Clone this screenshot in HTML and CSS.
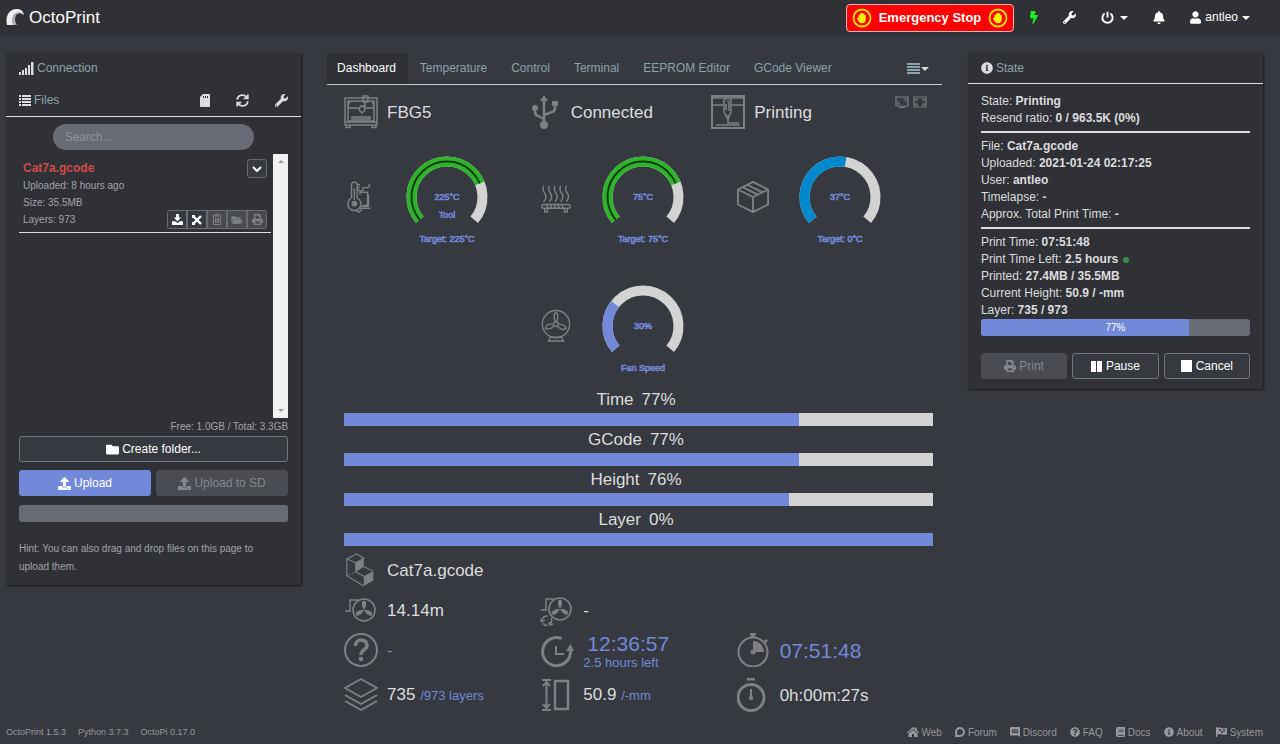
FILE: index.html
```html
<!DOCTYPE html>
<html lang="en">
<head>
  <meta charset="UTF-8" />
  <meta name="viewport" content="width=device-width, initial-scale=1.0" />
  <title>OctoPrint</title>
  <link rel="stylesheet" href="styles.css">
</head>
<body>
  <!-- shared icons -->
  <svg class="sprite" aria-hidden="true">
    <symbol id="i-wrench" viewBox="0 0 512 512"><path d="M507.73 109.1c-2.24-9.03-13.54-12.09-20.12-5.51l-74.36 74.36-67.88-11.31-11.31-67.88 74.36-74.36c6.62-6.62 3.43-17.9-5.66-20.16-47.38-11.74-99.55.91-136.58 37.93-39.64 39.64-50.55 97.1-34.05 147.2L18.74 402.76c-24.99 24.99-24.99 65.51 0 90.5 24.99 24.99 65.51 24.99 90.5 0l213.21-213.21c50.12 16.71 107.47 5.68 147.37-34.22 37.07-37.07 49.7-89.32 37.91-136.73zM64 472c-13.25 0-24-10.75-24-24 0-13.26 10.75-24 24-24s24 10.75 24 24c0 13.25-10.75 24-24 24z"/></symbol>
    <symbol id="i-upload" viewBox="0 0 512 512"><path d="M296 384h-80c-13.3 0-24-10.7-24-24V192h-87.7c-17.8 0-26.7-21.5-14.1-34.1L242.3 5.7c7.5-7.5 19.8-7.5 27.3 0l152.2 152.2c12.6 12.6 3.7 34.1-14.1 34.1H320v168c0 13.3-10.7 24-24 24zm216-8v112c0 13.3-10.7 24-24 24H24c-13.3 0-24-10.7-24-24V376c0-13.3 10.7-24 24-24h136v8c0 30.9 25.1 56 56 56h80c30.9 0 56-25.1 56-56v-8h136c13.3 0 24 10.7 24 24zm-124 88c0-11-9-20-20-20s-20 9-20 20 9 20 20 20 20-9 20-20zm64 0c0-11-9-20-20-20s-20 9-20 20 9 20 20 20 20-9 20-20z"/></symbol>
    <symbol id="i-print" viewBox="0 0 16 16"><path fill-rule="evenodd" d="M3 0h8l2 2v5h1a2 2 0 0 1 2 2v4h-3v3H3v-3H0V9a2 2 0 0 1 2-2h1zM5 2v5h6V4H9V2zM5 11v3h6v-3zM13 8.5a.8.8 0 1 0 .1 1.6.8.8 0 0 0-.1-1.6z"/></symbol>
    <symbol id="i-info" viewBox="0 0 512 512"><path d="M256 8C119.043 8 8 119.083 8 256c0 136.997 111.043 248 248 248s248-111.003 248-248C504 119.083 392.957 8 256 8zm0 110c23.196 0 42 18.804 42 42s-18.804 42-42 42-42-18.804-42-42 18.804-42 42-42zm56 254c0 6.627-5.373 12-12 12h-88c-6.627 0-12-5.373-12-12v-24c0-6.627 5.373-12 12-12h12v-64h-12c-6.627 0-12-5.373-12-12v-24c0-6.627 5.373-12 12-12h64c6.627 0 12 5.373 12 12v100h12c6.627 0 12 5.373 12 12v24z"/></symbol>
    <symbol id="i-hand" viewBox="0 0 20 20"><circle cx="10" cy="10" r="8.5" fill="none" stroke="#ffe000" stroke-width="1.8"/><path fill="#fff000" d="M6.5 7.600c0-1 1.300-1 1.300-.1V6c0-1 1.400-1 1.500 0v-.7c0-1 1.500-1 1.500 0V6c.1-1 1.500-.9 1.500.1v1.200c.1-.9 1.500-.8 1.500.2v3.700c0 2.500-1.500 4-3.600 4-1.800 0-2.900-.7-3.900-2.300L5 10.600c-.4-.8.6-1.400 1.500-.4z"/></symbol>
    <symbol id="i-fan" viewBox="0 0 24 24"><circle cx="12" cy="12" r="11" fill="none" stroke="currentColor" stroke-width="1.6"/><g fill="currentColor"><path d="M12 12 10 8V3.600q2-1.600 4 0V8z"/><path d="M12 12 10 8V3.600q2-1.600 4 0V8z" transform="rotate(120 12 12)"/><path d="M12 12 10 8V3.600q2-1.600 4 0V8z" transform="rotate(240 12 12)"/></g></symbol>
  </svg>

  <header class="navbar">
    <a class="brand" href="#">
      <svg width="18" height="17" viewBox="0 0 18 17"><path fill="#eee" d="M1 16C-1 7 3 0 11 0c4 0 6 2 7 6-3-3-6-2.500-8 0-2 3-1.500 7 .5 10z"/><path fill="#aaa" d="M7 16C5 11 6 5 10.500 3.500 13 3 16 3 17.500 6 14 3.500 11 4 9.700 6.500 8.500 9.500 9 13 10.500 16z"/></svg>
      OctoPrint
    </a>
    <nav class="nav-items">
      <button class="btn-stop"><svg width="20" height="20"><use href="#i-hand"/></svg>Emergency Stop<svg width="20" height="20"><use href="#i-hand"/></svg></button>
      <button class="nav-btn bolt" aria-label="Power"><svg width="8" height="13" viewBox="0 0 320 512"><path d="M296 160H180.600l42.600-129.800C227.200 15 215.700 0 200 0H56C44 0 33.800 8.900 32.200 20.800l-32 240C-1.700 275.200 9.500 288 24 288h118.700L96.600 482.500c-3.600 15.200 8 29.500 23.300 29.500 8.400 0 16.400-4.400 20.800-12l176-304c9.300-15.900-2.200-36-20.700-36z"/></svg></button>
      <button class="nav-btn" aria-label="Settings"><svg width="13" height="13"><use href="#i-wrench"/></svg></button>
      <button class="nav-btn" aria-label="System"><svg width="13" height="13" viewBox="0 0 16 16"><path class="line" stroke-width="2.400" d="M4.500 3a6.300 6.300 0 1 0 7 0M8 1v7"/></svg><i class="caret"></i></button>
      <button class="nav-btn" aria-label="Notifications"><svg width="12" height="13" viewBox="0 0 448 512"><path d="M224 512c35.320 0 63.970-28.650 63.970-64H160.030c0 35.350 28.650 64 63.970 64zm215.390-149.710c-19.320-20.760-55.470-51.990-55.470-154.290 0-77.700-54.480-139.900-127.940-155.160V32c0-17.670-14.320-32-31.980-32s-31.980 14.330-31.980 32v20.840C118.560 68.100 64.080 130.300 64.080 208c0 102.300-36.150 133.530-55.470 154.290-6 6.450-8.660 14.160-8.610 21.710.11 16.400 12.980 32 32.100 32h383.800c19.120 0 32-15.600 32.100-32 .05-7.550-2.610-15.270-8.610-21.710z"/></svg></button>
      <button class="nav-btn user"><svg width="11" height="13" viewBox="0 0 448 512"><path d="M224 256c70.700 0 128-57.300 128-128S294.700 0 224 0 96 57.300 96 128s57.300 128 128 128zm89.600 32h-16.700c-22.200 10.200-46.900 16-72.900 16s-50.600-5.800-72.900-16h-16.700C60.200 288 0 348.200 0 422.400V464c0 26.500 21.500 48 48 48h352c26.500 0 48-21.500 48-48v-41.600c0-74.200-60.200-134.400-134.400-134.400z"/></svg>antleo<i class="caret"></i></button>
    </nav>
  </header>

  <main class="layout">
    <aside class="panel">
      <h2 class="panel-title"><svg width="15" height="13" viewBox="0 0 15 13"><path d="M0 10h2v3H0zM3 8h2v5H3zM6 6h2v7H6zM9 3h2v10H9zM12 0h2.500v13H12z"/></svg>Connection</h2>
      <div class="panel-title files-title">
        <svg width="12" height="12" viewBox="0 0 12 12"><path d="M0 1h2v2H0zM3 1h9v2H3zM0 4h2v2H0zM3 4h9v2H3zM0 7h2v2H0zM3 7h9v2H3zM0 10h2v2H0zM3 10h9v2H3z"/></svg>
        <h2>Files</h2>
        <div class="title-tools">
          <button aria-label="SD card"><svg width="10" height="13" viewBox="0 0 10 13"><path fill-rule="evenodd" d="M3 0h6a1 1 0 0 1 1 1v11a1 1 0 0 1-1 1H1a1 1 0 0 1-1-1V3zM3 2v2h1V2zM5 2v2h1V2zM7 2v2h1V2z"/></svg></button>
          <button aria-label="Refresh"><svg width="13" height="13" viewBox="0 0 16 16"><path class="line" stroke-width="2.200" d="M1.500 7a6.500 6.500 0 0 1 12-2.500M14.500 9a6.500 6.500 0 0 1-12 2.500M14.500 .5v5h-5M1.500 15.500v-5h5"/></svg></button>
          <button aria-label="File settings"><svg width="13" height="13"><use href="#i-wrench"/></svg></button>
        </div>
      </div>

      <div class="files">
        <input class="search" type="text" placeholder="Search..." aria-label="Search files" />
        <div class="file-list">
          <div class="entry">
            <div class="entry-head"><a href="#">Cat7a.gcode</a><button class="toggle" aria-label="More"><svg width="10" height="6" viewBox="0 0 10 6"><path class="line" stroke-width="2" d="M1 1l4 4 4-4"/></svg></button></div>
            <div>Uploaded: 8 hours ago</div>
            <div>Size: 35.5MB</div>
            <div class="entry-foot">Layers: 973
              <div class="btn-row">
                <button aria-label="Download"><svg width="11" height="11" viewBox="0 0 16 16"><path d="M6 0h4v5h3.500L8 10.500 2.500 5H6zM0 10.500h4.500L8 13l3.500-2.500H16V16H0z"/></svg></button>
                <button aria-label="Cut"><svg width="10" height="10" viewBox="0 0 10 10"><path class="line" stroke-width="2.400" d="M1 1l8 8M9 1L1 9"/><path d="M0 0h3v3H0zM0 7h3v3H0z"/></svg></button>
                <button disabled aria-label="Delete"><svg width="10" height="11" viewBox="0 0 10 11"><path class="line" d="M0 2h10M3 2V.5h4V2M1.500 2.500v8h7v-8M3.500 4v5M5 4v5M6.500 4v5"/></svg></button>
                <button disabled aria-label="Load"><svg width="12" height="10" viewBox="0 0 576 512"><path d="M572.694 292.093L500.270 416.248A63.997 63.997 0 0 1 444.989 448H45.025c-18.523 0-30.064-20.093-20.731-36.093l72.424-124.155A64 64 0 0 1 152 256h399.964c18.523 0 30.064 20.093 20.730 36.093zM152 224h328v-48c0-26.510-21.490-48-48-48H272l-64-64H48C21.490 64 0 85.490 0 112v278.046l69.077-118.418C86.214 242.250 117.989 224 152 224z"/></svg></button>
                <button disabled aria-label="Print file"><svg width="11" height="11"><use href="#i-print"/></svg></button>
              </div>
            </div>
          </div>
          <div class="scroll"><i class="up"></i><i class="down"></i></div>
        </div>
        <div class="free">Free: 1.0GB / Total: 3.3GB</div>
        <button class="btn"><svg width="13" height="13" viewBox="0 0 512 512"><path d="M464 128H272l-64-64H48C21.490 64 0 85.490 0 112v288c0 26.510 21.490 48 48 48h416c26.510 0 48-21.490 48-48V176c0-26.510-21.490-48-48-48z"/></svg>Create folder...</button>
        <div class="uploads">
          <button class="btn btn-primary"><svg width="13" height="13"><use href="#i-upload"/></svg>Upload</button>
          <button class="btn" disabled><svg width="13" height="13"><use href="#i-upload"/></svg>Upload to SD</button>
        </div>
        <div class="progress"></div>
        <p class="hint">Hint: You can also drag and drop files on this page to upload them.</p>
      </div>
    </aside>

    <section class="center">
      <nav class="tabs">
        <a class="active" href="#">Dashboard</a>
        <a href="#">Temperature</a>
        <a href="#">Control</a>
        <a href="#">Terminal</a>
        <a href="#">EEPROM Editor</a>
        <a href="#">GCode Viewer</a>
        <button class="tab-menu" aria-label="More tabs"><svg width="13" height="11" viewBox="0 0 13 11"><path d="M0 0h13v2H0zM0 3h13v2H0zM0 6h13v2H0zM0 9h13v2H0z"/></svg><i class="caret"></i></button>
      </nav>

      <div class="dash">
        <div class="status-row">
          <div class="stat"><svg class="icon" viewBox="0 0 34 34"><path class="line" d="M1 3h32v27H1zM4 6h26v20H4zM1 27h32M2 30v2.500h4V30M28 30v2.500h4V30M4 11l2-5M30 11l-2-5M4 13h12M20 13h10M8 22h18v2H8z"/><path class="line" d="M19 7V1h5v6zM21 7v4h-5M18 11a3 3 0 0 1 2 5l-2 2-2-2a3 3 0 0 1 2-5z"/></svg>FBG5</div>
          <div class="stat"><svg class="icon" viewBox="0 0 34 34"><path class="line" stroke-width="2.500" d="M16 30V4M16 24l-6-3q-3-1-3-4v-4M16 20l8-3q3-1 3-4V8"/><path d="M12 6l4-6 4 6zM24 6h6v5h-6z"/><circle cx="7" cy="13" r="3"/><circle cx="16" cy="30" r="4"/></svg>Connected</div>
          <div class="stat"><svg class="icon" viewBox="0 0 34 34"><path class="line" stroke-width="2" d="M1 1h32v32H1z"/><path class="line" d="M2 3h30M2 10h10M21 10h11M13 17V5q4-4 7 0v12l-2 4h-3zM15 21l2 4 1-4M17 25v3h11M5 30h24M15 9v6M18 7v9M16 6h2"/></svg>Printing</div>
          <div class="views">
            <svg width="14" height="12" viewBox="0 0 14 12"><path class="line" stroke-width="1.200" d="M1 1h12v9H1zM4 11.500h6M3 5.500V8h2.500M8.500 3H11v2.500"/></svg>
            <svg width="14" height="12" viewBox="0 0 14 12"><path class="line" stroke-width="1.200" d="M1 1h12v10H1zM3 5V3h2M9 3h2v2M3 7v2h2M9 9h2V7"/></svg>
          </div>
        </div>

        <div class="gauges">
          <div class="gauge">
            <svg class="icon" viewBox="0 0 34 34"><path class="line" d="M8 18V3q3-4 6 0v15a7 7 0 1 1-6 0zM11 8v12M14 4h3M14 7h3M14 10h3M17 12h8v15h-8M17 14v-2q0-2 3-2V7h5l2-1V3M25 15h1v11h-6M17 29h11M12 31l4 2 3-3"/><circle cx="11" cy="24" r="3"/></svg>
            <svg class="dial" viewBox="0 0 96 96">
              <path class="arc" d="M20.800 68.800a35.500 35.500 0 1 1 54.400 0"/>
              <path class="arc hot" pathLength="100" stroke-dasharray="76 100" d="M20.800 68.800a35.500 35.500 0 1 1 54.400 0"/>
              <path class="arc target" pathLength="100" stroke-dasharray="76 100" d="M20.800 68.800a35.500 35.500 0 1 1 54.400 0"/>
              <text x="48" y="49">225°C</text><text x="48" y="67">Tool</text><text x="48" y="91">Target: 225°C</text>
            </svg>
          </div>
          <div class="gauge">
            <svg class="icon" viewBox="0 0 34 34"><path class="line" d="M4 5q-2 4 1 8t-1 9M10 5q-2 4 1 8t-1 9M16 5q-2 4 1 8t-1 9M22 5q-2 4 1 8t-1 9M28 5q-2 4 1 8t-1 9M3 25h28q2 2 0 4H3q-2-2 0-4zM5 29v4h3v-4M26 29v4h3v-4M7 26l2 3M11 26l2 3M15 26l2 3M19 26l2 3M23 26l2 3"/></svg>
            <svg class="dial" viewBox="0 0 96 96">
              <path class="arc" d="M20.800 68.800a35.500 35.500 0 1 1 54.400 0"/>
              <path class="arc hot" pathLength="100" stroke-dasharray="76 100" d="M20.800 68.800a35.500 35.500 0 1 1 54.400 0"/>
              <path class="arc target" pathLength="100" stroke-dasharray="76 100" d="M20.800 68.800a35.500 35.500 0 1 1 54.400 0"/>
              <text x="48" y="49">75°C</text><text x="48" y="91">Target: 75°C</text>
            </svg>
          </div>
          <div class="gauge">
            <svg class="icon" viewBox="0 0 34 34"><path class="line" stroke-width="2" stroke-linejoin="round" d="M17 1l16 8v16l-16 8-16-8V9zM1 9l16 8 16-8M17 17v16M6 6.500l16 8M11 4l16 8"/></svg>
            <svg class="dial" viewBox="0 0 96 96">
              <path class="arc" d="M20.800 68.800a35.500 35.500 0 1 1 54.400 0"/>
              <path class="arc cold" pathLength="100" stroke-dasharray="53.500 100" d="M20.800 68.800a35.500 35.500 0 1 1 54.400 0"/>
              <text x="48" y="49">37°C</text><text x="48" y="91">Target: 0°C</text>
            </svg>
          </div>
          <div class="gauge fan">
            <svg class="icon" viewBox="0 0 34 34"><circle class="line" cx="17" cy="15" r="14.500"/><circle class="line" cx="17" cy="15" r="2.500"/><path class="line" d="M16 12q-2-5 0-9 3 0 3 4l-1 5M20 15q5 0 8 4-2 3-6 1l-4-3M15 17q-4 4-9 3 0-4 4-5h5M11 29l-2 4h16l-2-4M11 29h12"/></svg>
            <svg class="dial" viewBox="0 0 96 96">
              <path class="arc" d="M20.800 68.800a35.500 35.500 0 1 1 54.400 0"/>
              <path class="arc speed" pathLength="100" stroke-dasharray="30 100" d="M20.800 68.800a35.500 35.500 0 1 1 54.400 0"/>
              <text x="48" y="49">30%</text><text x="48" y="91">Fan Speed</text>
            </svg>
          </div>
        </div>

        <div class="bars">
          <div class="bar-label"><span>Time</span><span>77%</span></div>
          <div class="bar"><div style="width: 77.3%"></div></div>
          <div class="bar-label"><span>GCode</span><span>77%</span></div>
          <div class="bar"><div style="width: 77.3%"></div></div>
          <div class="bar-label"><span>Height</span><span>76%</span></div>
          <div class="bar"><div style="width: 75.6%"></div></div>
          <div class="bar-label"><span>Layer</span><span>0%</span></div>
          <div class="bar"><div style="width: 100%"></div></div>
        </div>

        <div class="stats">
          <div class="stat wide"><svg class="icon" viewBox="0 0 34 36"><path class="line" stroke-width="1.200" d="M2 6l10.500-5L20 5.500l-8.500 5zM2 6v18l18 11M11.500 10.500V20l8.500 4.500M20 14.500l10 4.500"/><path class="line" stroke-width="1" stroke-dasharray="2 1" d="M2 24l9.500-4"/><path d="M11.500 10.500l8.500-5v9L11.500 20zM20 24.500L30 19v10l-10 6z"/></svg>Cat7a.gcode</div>
          <div class="stat"><svg class="icon" viewBox="0 0 34 34"><path class="line" d="M1 18h5V7h8"/><svg x="8" y="5" width="24" height="24"><use href="#i-fan"/></svg></svg>14.14m</div>
          <div class="stat wide-2"><svg class="icon" viewBox="0 0 34 34"><path class="line" d="M1 17h5V6h8"/><svg x="8" y="4" width="24" height="24"><use href="#i-fan"/></svg><path class="line" d="M2 28a5 5 0 0 1 6-5M11 25a5 5 0 0 1-1 6M8 32.500a5 5 0 0 1-5-2M0 26l2 3 3-2M9 29l1 3 3-1"/></svg>-</div>
          <div class="stat blue"><svg class="icon" viewBox="0 0 34 34"><circle class="line" stroke-width="2" cx="17" cy="17" r="16"/><path class="line" stroke-width="3.500" d="M11.500 13c0-8 11.500-7.500 11.500-1 0 5-6 4.500-6 10"/><circle cx="17" cy="26" r="2.300"/></svg>-</div>
          <div class="stat blue"><svg class="icon" viewBox="0 0 34 34"><path class="line" stroke-width="3" d="M21.500 5.500A14 14 0 1 0 30.500 20V17"/><path d="M26 18l4.500-7 3.500 7z"/><path class="line" stroke-width="2" d="M16 13v8h8"/></svg><div class="eta"><span class="time">12:36:57</span><small>2.5 hours left</small></div></div>
          <div class="stat blue"><svg class="icon" viewBox="0 0 34 34"><circle class="line" stroke-width="2" cx="16" cy="19" r="14.500"/><path d="M13 0h6v2h-1v3h-4V2h-1zM27 8l2-2 2 2-2 2zM16 8a11 11 0 0 1 11 11H16z"/><circle cx="16" cy="19" r="2.500"/></svg><span class="time">07:51:48</span></div>
          <div class="stat"><svg class="icon" viewBox="0 0 34 34"><path class="line" stroke-width="2" stroke-linejoin="round" d="M17 1l16 9-16 9L1 10zM1 17l16 9 16-9M1 23l16 9 16-9"/></svg><span>735 <small>/973 layers</small></span></div>
          <div class="stat"><svg class="icon" viewBox="0 0 34 34"><path class="line" stroke-width="2" d="M2 2h9M2 32h9M6.500 3v28M3 8l3.500-4L10 8M3 26l3.500 4 3.500-4"/><path class="line" stroke-width="2.500" d="M15 3h13v28H15z"/></svg><span>50.9 <small>/-mm</small></span></div>
          <div class="stat"><svg class="icon" viewBox="0 0 34 34"><circle class="line" stroke-width="3" cx="14" cy="19.500" r="13"/><path d="M10 0h8v2.500h-8z"/><path class="line" stroke-width="2" d="M14 11v9"/><circle cx="14" cy="20" r="2.200"/></svg>0h:00m:27s</div>
        </div>
      </div>
    </section>

    <aside class="panel">
      <h2 class="panel-title state-title"><svg width="12" height="12"><use href="#i-info"/></svg>State</h2>
      <div class="state">
        <div>State: <b>Printing</b></div>
        <div>Resend ratio: <b>0 / 963.5K (0%)</b></div>
        <hr>
        <div>File: <b>Cat7a.gcode</b></div>
        <div>Uploaded: <b>2021-01-24 02:17:25</b></div>
        <div>User: <b>antleo</b></div>
        <div>Timelapse: <b>-</b></div>
        <div>Approx. Total Print Time: <b>-</b></div>
        <hr>
        <div>Print Time: <b>07:51:48</b></div>
        <div>Print Time Left: <b>2.5 hours</b> <i class="dot"></i></div>
        <div>Printed: <b>27.4MB / 35.5MB</b></div>
        <div>Current Height: <b>50.9 / -mm</b></div>
        <div>Layer: <b>735 / 973</b></div>
        <div class="progress"><div style="width: 77.3%"></div><span>77%</span></div>
        <div class="job-buttons">
          <button class="btn" disabled><svg width="12" height="12"><use href="#i-print"/></svg>Print</button>
          <button class="btn"><svg width="12" height="11" viewBox="0 0 12 11"><path d="M0 0h5v11H0zM6 0h5v11H6z"/></svg>Pause</button>
          <button class="btn"><svg width="12" height="12" viewBox="0 0 12 12"><path d="M0 0h11v12H0z"/></svg>Cancel</button>
        </div>
      </div>
    </aside>
  </main>

  <footer class="footer">
    <div class="versions"><span>OctoPrint 1.5.3</span><span>Python 3.7.3</span><span>OctoPi 0.17.0</span></div>
    <div class="links">
      <a href="#"><svg width="12" height="10" viewBox="0 0 12 10"><path d="M6 0l2.500 2V.5H10v3l2 2-.8.8L6 2 .8 6.300 0 5.500zM6 3l4.500 3.500V10H7V7H5v3H1.500V6.500z"/></svg>Web</a>
      <a href="#"><svg width="10" height="10" viewBox="0 0 10 10"><path class="line" stroke-width="2" d="M1 9l.5-2A4 4 0 1 1 5 9z"/></svg>Forum</a>
      <a href="#"><svg width="10" height="10" viewBox="0 0 10 10"><path fill-rule="evenodd" d="M1 0h8a1 1 0 0 1 1 1v9L8 8.500H1a1 1 0 0 1-1-1V1a1 1 0 0 1 1-1zM2 2.500V6h6V2.500z"/><path d="M3 3.500h1.500V5H3zM5.500 3.500H7V5H5.500z"/></svg>Discord</a>
      <a href="#"><svg width="10" height="10" viewBox="0 0 512 512"><path d="M504 256c0 136.997-111.043 248-248 248S8 392.997 8 256C8 119.083 119.043 8 256 8s248 111.083 248 248zM262.655 90c-54.497 0-89.255 22.957-116.549 63.758-3.536 5.286-2.353 12.415 2.715 16.258l34.699 26.310c5.205 3.947 12.621 3.008 16.665-2.122 17.864-22.658 30.113-35.797 57.303-35.797 20.429 0 45.698 13.148 45.698 32.958 0 14.976-12.363 22.667-32.534 33.976C247.128 238.528 216 254.941 216 296v4c0 6.627 5.373 12 12 12h56c6.627 0 12-5.373 12-12v-1.333c0-28.462 83.186-29.647 83.186-106.667 0-58.002-60.165-102-116.531-102zM256 338c-25.365 0-46 20.635-46 46 0 25.364 20.635 46 46 46s46-20.636 46-46c0-25.365-20.635-46-46-46z"/></svg>FAQ</a>
      <a href="#"><svg width="9" height="10" viewBox="0 0 9 10"><path fill-rule="evenodd" d="M2 0h7v8l-.5 2H2a2 2 0 0 1-2-2V2a2 2 0 0 1 2-2zM2.500 2.500v.8h5v-.8zM2.500 4.300v.8h5v-.8zM2 7.700v1h5.500v-1z"/></svg>Docs</a>
      <a href="#"><svg width="10" height="10"><use href="#i-info"/></svg>About</a>
      <a href="#"><svg width="11" height="10" viewBox="0 0 11 10"><path fill-rule="evenodd" d="M0 0h1.300v1q2.500-1 4.500 0t5.200-.3v6.600q-2.500 1.200-4.700.3T1.300 7.500V10H0zM3 2v1.700h2V2zM7 2.500v1.700h2V2.500zM5 4.300V6h2V4.300z"/></svg>System</a>
    </div>
  </footer>
</body>
</html>
```
FILE: styles.css
```css
* {
  box-sizing: border-box;
}

body {
  margin: 0;
  min-height: 100vh;
  display: flex;
  flex-direction: column;
  background: #363940;
  color: #dcddde;
  font-family: "Liberation Sans", Arial, sans-serif;
  font-size: 12px;
  line-height: 17px;
}

a {
  color: inherit;
  text-decoration: none;
}

button {
  font: inherit;
  color: inherit;
  background: none;
  border: none;
  padding: 0;
  cursor: pointer;
}

h2 {
  margin: 0;
  font-size: 12px;
  font-weight: normal;
}

svg {
  fill: currentColor;
  flex-shrink: 0;
}

.sprite {
  position: absolute;
  width: 0;
  height: 0;
}

.line {
  fill: none;
  stroke: currentColor;
}

.caret {
  border: 4px solid transparent;
  border-top-color: currentColor;
  border-bottom: none;
}

/* top bar */
.navbar {
  display: flex;
  align-items: center;
  justify-content: space-between;
  height: 35px;
  padding: 0 30px 0 6px;
  background: #303136;
  box-shadow: 0 1px 4px rgba(0,0,0,0.15);
  color: #fff;
}

.brand {
  display: flex;
  align-items: center;
  gap: 5px;
  font-size: 17px;
}

.nav-items {
  display: flex;
  align-items: center;
}

.nav-btn {
  display: flex;
  align-items: center;
  gap: 6px;
  margin-left: 25px;
}

.nav-btn.bolt {
  margin-left: 16px;
  color: #1bf01b;
}

.nav-btn.user {
  gap: 4px;
}

.btn-stop {
  display: flex;
  align-items: center;
  gap: 7px;
  height: 28px;
  padding: 0 5px;
  background: #fe0000;
  border: 1px solid #f5b5b5;
  border-radius: 4px;
  font-size: 13px;
  font-weight: bold;
}

/* page columns */
.layout {
  flex: 1;
  display: grid;
  grid-template-columns: 12fr 25fr 12fr;
  gap: 26px;
  align-items: start;
  padding: 18px 17px 0 6px;
}

.panel {
  background: #2f3136;
  box-shadow: 1px 1px 2px rgba(0,0,0,0.6);
}

.panel-title {
  display: flex;
  align-items: center;
  gap: 3px;
  height: 31px;
  padding: 0 13px;
  color: #8ba3ab;
}

.panel-title svg {
  color: #dcddde;
}

.files-title {
  height: 33px;
  border-bottom: 1px solid #dcddde;
}

.title-tools {
  display: flex;
  gap: 26px;
  margin-left: auto;
}

.title-tools button {
  display: flex;
}

/* files */
.files {
  display: flex;
  flex-direction: column;
  padding: 7px 13px 9px;
}

.search {
  align-self: center;
  width: 75%;
  height: 26px;
  padding: 0 12px;
  background: #666b75;
  border: none;
  border-radius: 13px;
  font: inherit;
  color: #dcddde;
}

.search::placeholder {
  color: #909399;
}

.file-list {
  display: flex;
  align-items: flex-start;
  gap: 2px;
  height: 264px;
  margin-top: 4px;
}

.entry {
  flex: 1;
  padding: 6px 4px 4px;
  border-bottom: 1px solid #dcddde;
  font-size: 10px;
  color: #a2a4a8;
}

.entry-head,
.entry-foot {
  display: flex;
  justify-content: space-between;
  align-items: center;
  height: 17px;
}

.entry-head a {
  font-size: 12px;
  font-weight: bold;
  color: #d14b4b;
}

.toggle,
.btn-row button {
  display: flex;
  align-items: center;
  justify-content: center;
  width: 20px;
  height: 19px;
  border: 1px solid #666b75;
  background: #36393f;
  color: #fff;
}

.toggle {
  border-radius: 3px;
}

.btn-row {
  display: flex;
  border-radius: 3px;
  overflow: hidden;
}

.btn-row button:disabled {
  background: #484a50;
  color: #7d8087;
}

.scroll {
  display: flex;
  flex-direction: column;
  justify-content: space-between;
  align-items: center;
  align-self: stretch;
  width: 15px;
  padding: 6px 0;
  background: #f1f1f1;
}

.scroll i {
  border: 3px solid transparent;
}

.scroll .up {
  border-top: none;
  border-bottom-color: #999;
}

.scroll .down {
  border-bottom: none;
  border-top-color: #999;
}

.free {
  font-size: 10px;
  line-height: 18px;
  text-align: right;
  color: #a2a4a8;
}

.btn {
  display: flex;
  align-items: center;
  justify-content: center;
  gap: 3px;
  height: 26px;
  background: #36393f;
  border: 1px solid #72767d;
  border-radius: 3px;
  color: #fff;
}

.btn:disabled {
  background: #4a4c53;
  border-color: #4a4c53;
  color: #85888e;
}

.btn-primary {
  background: #7289da;
  border-color: #7289da;
}

.uploads {
  display: grid;
  grid-template-columns: 1fr 1fr;
  gap: 5px;
  margin: 8px 0 9px;
}

.progress {
  position: relative;
  height: 17px;
  background: #666b75;
  border-radius: 3px;
  overflow: hidden;
}

.progress div {
  height: 100%;
  background: #7289da;
}

.progress span {
  position: absolute;
  inset: 0;
  text-align: center;
  font-size: 10px;
  color: #fff;
}

.hint {
  margin: 18px 0 0;
  padding-right: 12px;
  font-size: 10px;
  line-height: 18px;
  color: #a2a4a8;
}

/* tabs */
.tabs {
  display: flex;
  height: 32px;
  line-height: 31px;
  border-bottom: 1px solid #c5c8cc;
  color: #8ba3ab;
}

.tabs a {
  padding: 0 12px;
}

.tabs .active {
  padding-left: 10px;
  background: #2e3035;
  color: #fff;
}

.tab-menu {
  display: flex;
  align-items: center;
  gap: 1px;
  margin-left: auto;
  padding-right: 13px;
}

.tab-menu .caret {
  color: #dcddde;
}

/* dashboard */
.dash {
  padding: 10px 9px 0 17px;
}

.status-row {
  display: grid;
  grid-template-columns: repeat(3, 1fr) 38px;
}

.stat {
  display: flex;
  align-items: center;
  gap: 9px;
  font-size: 17px;
  white-space: nowrap;
}

.icon {
  width: 34px;
  height: 34px;
  color: #7e8084;
  stroke-width: 1.5;
}

.views {
  display: flex;
  gap: 4px;
  padding-top: 1px;
  color: #7e8084;
}

.gauges {
  display: grid;
  grid-template-columns: repeat(3, 1fr);
  row-gap: 33px;
  margin-top: 22px;
}

.gauge {
  display: flex;
  align-items: flex-start;
  gap: 23px;
}

.gauge .icon {
  width: 32px;
  margin-top: 29px;
}

.fan {
  grid-column: 2;
}

.dial {
  width: 96px;
  height: 96px;
}

.arc {
  fill: none;
  stroke: #d3d3d3;
  stroke-width: 10;
}

.hot {
  stroke: #2fb32b;
}

.target {
  stroke: #0b3d0a;
  stroke-width: 2;
}

.cold {
  stroke: #0088cc;
}

.speed {
  stroke: #7289da;
}

.dial text {
  font-size: 9px;
  text-anchor: middle;
  fill: #7289da;
  stroke: #7289da;
  stroke-width: 0.6;
}

.bars {
  margin-top: 14px;
}

.bar-label {
  display: flex;
  justify-content: center;
  gap: 8px;
  padding-right: 5px;
  font-size: 17px;
  line-height: 20px;
}

.bar {
  height: 13px;
  margin: 3px 0 4px;
  background: #d3d3d3;
}

.bar div {
  height: 100%;
  background: #7289da;
}

.stats {
  display: grid;
  grid-template-columns: repeat(3, 1fr);
  grid-template-rows: 40px 40px 40px 50px;
}

.wide {
  grid-column: span 3;
}

.wide-2 {
  grid-column: span 2;
}

.blue,
.stat small {
  color: #7289da;
}

.stat small {
  font-size: 13px;
}

.time {
  font-size: 21px;
}

.eta {
  display: flex;
  flex-direction: column;
  padding-top: 4px;
}

.eta .time {
  line-height: 20px;
  padding-left: 4px;
}

/* state */
.state-title {
  border-bottom: 1px solid #dcddde;
}

.state {
  padding: 9px 13px 10px;
}

.state hr {
  height: 2px;
  margin: 4px 0 5px;
  border: none;
  background: #dcddde;
}

.dot {
  display: inline-block;
  width: 6px;
  height: 6px;
  margin-left: 1px;
  border-radius: 50%;
  background: #3f8a49;
}

.job-buttons {
  display: grid;
  grid-template-columns: repeat(3, 1fr);
  gap: 5px;
  margin-top: 17px;
}

/* footer */
.footer {
  display: flex;
  justify-content: space-between;
  align-items: center;
  height: 24px;
  padding: 0 17px 0 6px;
  color: #96989d;
}

.versions {
  display: flex;
  gap: 12px;
  font-size: 9px;
}

.links {
  display: flex;
  gap: 13px;
  font-size: 10px;
}

.links a {
  display: flex;
  align-items: center;
  gap: 3px;
}
```
